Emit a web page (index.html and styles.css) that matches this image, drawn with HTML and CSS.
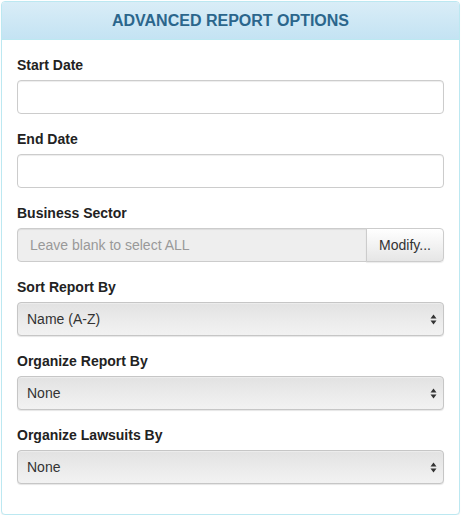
FILE: index.html
```html
<!DOCTYPE html>
<html>
<head>
<meta charset="utf-8">
<link rel="stylesheet" href="styles.css">
</head>
<body>
<div class="panel">
  <div class="panel-heading"><h3 class="panel-title">ADVANCED REPORT OPTIONS</h3></div>
  <div class="panel-body">
    <div class="form-group">
      <label class="lbl">Start Date</label>
      <input class="form-control" type="text">
    </div>
    <div class="form-group">
      <label class="lbl">End Date</label>
      <input class="form-control" type="text">
    </div>
    <div class="form-group">
      <label class="lbl">Business Sector</label>
      <div class="input-group">
        <input class="form-control grouped" type="text" readonly placeholder="Leave blank to select ALL">
        <button class="btn">Modify...</button>
      </div>
    </div>
    <div class="form-group">
      <label class="lbl">Sort Report By</label>
      <select class="sel"><option>Name (A-Z)</option></select>
    </div>
    <div class="form-group">
      <label class="lbl">Organize Report By</label>
      <select class="sel"><option>None</option></select>
    </div>
    <div class="form-group">
      <label class="lbl">Organize Lawsuits By</label>
      <select class="sel"><option>None</option></select>
    </div>
  </div>
</div>
</body>
</html>
```
FILE: styles.css
```css
* { box-sizing: border-box; }
html, body { margin: 0; padding: 0; background: #fff; }
body {
  font-family: "Liberation Sans", Arial, Helvetica, sans-serif;
  font-size: 14px;
  line-height: 20px;
  color: #333;
  padding: 1px 0 0 1px;
}
.panel {
  width: 459px;
  border: 1px solid #bce8f1;
  border-radius: 4px;
  background: #fff;
  box-shadow: 0 1px 1px rgba(0,0,0,0.05);
}
.panel-heading {
  padding: 10px 15px;
  border-bottom: 1px solid #bce8f1;
  border-radius: 3px 3px 0 0;
  background: linear-gradient(#d9edf7, #c4e3f3);
  color: #2b668c;
  text-align: center;
}
.panel-title {
  margin: 0;
  font-size: 16px;
  line-height: 17px;
  font-weight: bold;
  color: #2b668c;
}
.panel-body { padding: 15px; }
.form-group { margin-bottom: 15px; }
.lbl {
  display: block;
  font-weight: bold;
  margin-bottom: 5px;
  color: #222;
}
.form-control {
  display: block;
  width: 100%;
  height: 34px;
  padding: 6px 12px;
  font-family: inherit;
  font-size: 14px;
  color: #555;
  background: #fff;
  border: 1px solid #ccc;
  border-radius: 4px;
  box-shadow: inset 0 1px 1px rgba(0,0,0,0.075);
  outline: none;
}
.input-group { display: flex; }
.form-control.grouped {
  flex: 1;
  width: auto;
  min-width: 0;
  background: #eee;
  border-radius: 4px 0 0 4px;
}
.form-control.grouped::placeholder { color: #999; }
.btn {
  height: 34px;
  width: 78px;
  margin-left: -1px;
  padding: 6px 12px;
  font-family: inherit;
  font-size: 14px;
  color: #333;
  border: 1px solid #ccc;
  border-radius: 0 4px 4px 0;
  background: linear-gradient(#ffffff, #e6e6e6);
  box-shadow: 0 1px 1px rgba(0,0,0,0.08);
}
.sel {
  display: block;
  width: 100%;
  height: 34px;
  padding: 0 24px 0 9px;
  font-family: inherit;
  font-size: 14px;
  color: #333;
  border: 1px solid #c6c6c6;
  border-radius: 4px;
  -webkit-appearance: none;
  appearance: none;
  background-color: #e8e8e8;
  background-image:
    url("data:image/svg+xml,%3Csvg xmlns='http://www.w3.org/2000/svg' width='7' height='11' viewBox='0 0 7 11'%3E%3Cpath d='M3.5 0.5L6.5 4.5H0.5Z M3.5 10.5L6.5 6.5H0.5Z' fill='%23333'/%3E%3C/svg%3E"),
    linear-gradient(#e2e2e2, #ececec 60%, #f2f2f2);
  background-repeat: no-repeat, no-repeat;
  background-position: right 6px center, 0 0;
  box-shadow: inset 0 1px 1px rgba(255,255,255,0.4), 0 1px 1px rgba(0,0,0,0.1);
  outline: none;
}
```
